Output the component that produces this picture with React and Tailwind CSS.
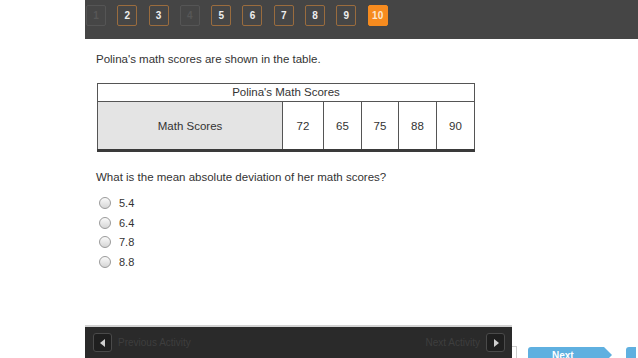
import React from 'react'

const pages = [
    { n: 1, state: "off" },
    { n: 2, state: "on" },
    { n: 3, state: "on" },
    { n: 4, state: "off" },
    { n: 5, state: "on" },
    { n: 6, state: "on" },
    { n: 7, state: "on" },
    { n: 8, state: "on" },
    { n: 9, state: "on" },
    { n: 10, state: "current" },
];

const scores = [72, 65, 75, 88, 90];
const choices = ["5.4", "6.4", "7.8", "8.8"];

const PageButton = ({ n, state }) => {
    const look =
        state === "current"
            ? "bg-[#f68b1f] border-[#f68b1f] text-[#fde7cf]"
            : state === "on"
            ? "bg-[#464646] border-[#9a6c3e] text-[#eeeeee]"
            : "bg-[#464646] border-[#555555] text-[#575757]";
    return (
        <div className={`w-[20px] h-[21px] rounded-[2px] border flex items-center justify-center text-[10px] font-bold ${look}`}>
            {n}
        </div>
    );
};

const App = () => {
    return (
        <div className="w-[638px] h-[358px] overflow-hidden bg-white flex flex-col font-['Liberation_Sans',Arial,sans-serif] text-[#333333]">
            {/* question nav */}
            <div className="ml-[85px] h-[39px] bg-[#454545] shrink-0 flex items-start pt-[5px] pl-px gap-[11.3px]">
                {pages.map((p) => (
                    <PageButton key={p.n} {...p} />
                ))}
            </div>

            <div className="pl-[96px] pt-[13px] text-[11.5px] leading-[14px]">
                <p>Polina's math scores are shown in the table.</p>

                <table className="mt-[17px] ml-px border-collapse border border-[#555555] text-[11.5px] text-[#333333]">
                    <tbody>
                        <tr>
                            <td colSpan={6} className="h-[18px] p-0 text-center border border-[#555555] leading-[15px]">
                                Polina's Math Scores
                            </td>
                        </tr>
                        <tr>
                            <td className="w-[185px] h-[49px] p-0 bg-[#e4e4e4] text-center border border-[#555555] border-b-[3px] border-b-[#3a3a3a]">
                                Math Scores
                            </td>
                            {scores.map((s, i) => (
                                <td
                                    key={i}
                                    className={`${i === 0 ? "w-[41px]" : i === 1 ? "w-[38px]" : i === 2 ? "w-[37px]" : "w-[38px]"} p-0 text-center border border-[#555555] border-b-[3px] border-b-[#3a3a3a]`}
                                >
                                    {s}
                                </td>
                            ))}
                        </tr>
                    </tbody>
                </table>

                <p className="mt-[18px]">What is the mean absolute deviation of her math scores?</p>

                <div className="mt-[12px] flex flex-col gap-[5.7px] pl-[3px]">
                    {choices.map((c) => (
                        <label key={c} className="flex items-center h-[14px] text-[11px]">
                            <span className="w-[12px] h-[12px] rounded-full border border-[#9a9a9a] bg-gradient-to-b from-[#fafafa] to-[#d6d6d6]" />
                            <span className="ml-[8px]">{c}</span>
                        </label>
                    ))}
                </div>
            </div>

            <div className="flex-1" />

            {/* activity footer */}
            <div className="flex items-start h-[33px] shrink-0">
                <div className="ml-[85px] w-[427px] shrink-0 h-[33px] bg-[#2a2a2a] border-t-2 border-t-[#d2d2d2] flex items-center justify-between pl-[8px] pr-[7px] text-[10px] text-[#3e3e3e]">
                    <div className="flex items-center gap-[6px]">
                        <div className="w-[19px] h-[19px] rounded-[3px] border border-[#4a4a4a] bg-[#1f1f1f] flex items-center justify-center">
                            <svg width="6" height="8" viewBox="0 0 6 8">
                                <path d="M5 0 L0 4 L5 8 Z" fill="#cfcfcf" />
                            </svg>
                        </div>
                        <span>Previous Activity</span>
                    </div>
                    <div className="flex items-center gap-[6px]">
                        <span>Next Activity</span>
                        <div className="w-[19px] h-[19px] rounded-[3px] border border-[#4a4a4a] bg-[#1f1f1f] flex items-center justify-center">
                            <svg width="6" height="8" viewBox="0 0 6 8">
                                <path d="M1 0 L6 4 L1 8 Z" fill="#cfcfcf" />
                            </svg>
                        </div>
                    </div>
                </div>
                <div className="mt-[21px] w-[5px] h-[14px] shrink-0 border border-[#cccccc] border-l-0 bg-white" />
                <div className="mt-[22px] ml-[11px] shrink-0 relative w-[76px] h-[14px] bg-[#5fb0e0] rounded-tl-[3px] text-white text-[10px] font-bold pl-[24px] leading-[14px] pt-[2px]">
                    Next
                    <div className="absolute right-[-8px] top-0 w-0 h-0 border-t-[8px] border-t-transparent border-b-[8px] border-b-transparent border-l-[8px] border-l-[#5fb0e0]" />
                </div>
                <div className="mt-[22px] ml-[22px] shrink-0 w-[10px] h-[14px] bg-[#5fb0e0] rounded-tl-[3px]" />
            </div>
        </div>
    )
}

export default App
